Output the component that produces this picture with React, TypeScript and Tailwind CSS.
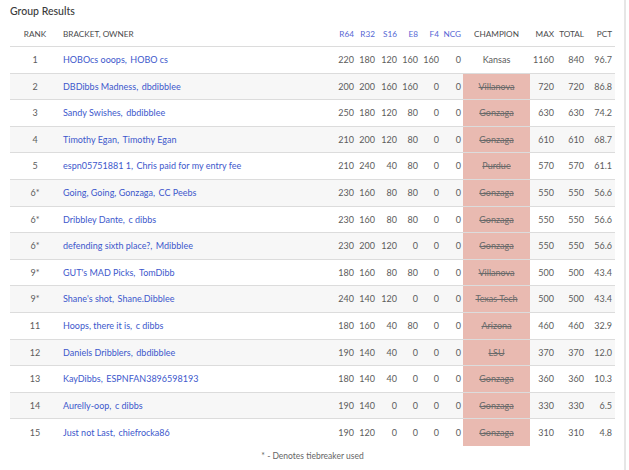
import React from "react";

type Row = {
  rank: string;
  bracket: string;
  owner: string;
  pts: number[];
  champ: string;
  alive?: boolean;
  max: string;
  total: string;
  pct: string;
};

const rows: Row[] = [
  { rank: "1", bracket: "HOBOcs ooops,", owner: "HOBO cs", pts: [220, 180, 120, 160, 160, 0], champ: "Kansas", alive: true, max: "1160", total: "840", pct: "96.7" },
  { rank: "2", bracket: "DBDibbs Madness,", owner: "dbdibblee", pts: [200, 200, 160, 160, 0, 0], champ: "Villanova", max: "720", total: "720", pct: "86.8" },
  { rank: "3", bracket: "Sandy Swishes,", owner: "dbdibblee", pts: [250, 180, 120, 80, 0, 0], champ: "Gonzaga", max: "630", total: "630", pct: "74.2" },
  { rank: "4", bracket: "Timothy Egan,", owner: "Timothy Egan", pts: [210, 200, 120, 80, 0, 0], champ: "Gonzaga", max: "610", total: "610", pct: "68.7" },
  { rank: "5", bracket: "espn05751881 1,", owner: "Chris paid for my entry fee", pts: [210, 240, 40, 80, 0, 0], champ: "Purdue", max: "570", total: "570", pct: "61.1" },
  { rank: "6*", bracket: "Going, Going, Gonzaga,", owner: "CC Peebs", pts: [230, 160, 80, 80, 0, 0], champ: "Gonzaga", max: "550", total: "550", pct: "56.6" },
  { rank: "6*", bracket: "Dribbley Dante,", owner: "c dibbs", pts: [230, 160, 80, 80, 0, 0], champ: "Gonzaga", max: "550", total: "550", pct: "56.6" },
  { rank: "6*", bracket: "defending sixth place?,", owner: "Mdibblee", pts: [230, 200, 120, 0, 0, 0], champ: "Gonzaga", max: "550", total: "550", pct: "56.6" },
  { rank: "9*", bracket: "GUT's MAD Picks,", owner: "TomDibb", pts: [180, 160, 80, 80, 0, 0], champ: "Villanova", max: "500", total: "500", pct: "43.4" },
  { rank: "9*", bracket: "Shane's shot,", owner: "Shane.Dibblee", pts: [240, 140, 120, 0, 0, 0], champ: "Texas Tech", max: "500", total: "500", pct: "43.4" },
  { rank: "11", bracket: "Hoops, there it is,", owner: "c dibbs", pts: [180, 160, 40, 80, 0, 0], champ: "Arizona", max: "460", total: "460", pct: "32.9" },
  { rank: "12", bracket: "Daniels Dribblers,", owner: "dbdibblee", pts: [190, 140, 40, 0, 0, 0], champ: "LSU", max: "370", total: "370", pct: "12.0" },
  { rank: "13", bracket: "KayDibbs,", owner: "ESPNFAN3896598193", pts: [180, 140, 40, 0, 0, 0], champ: "Gonzaga", max: "360", total: "360", pct: "10.3" },
  { rank: "14", bracket: "Aurelly-oop,", owner: "c dibbs", pts: [190, 140, 0, 0, 0, 0], champ: "Gonzaga", max: "330", total: "330", pct: "6.5" },
  { rank: "15", bracket: "Just not Last,", owner: "chiefrocka86", pts: [190, 120, 0, 0, 0, 0], champ: "Gonzaga", max: "310", total: "310", pct: "4.8" },
];

const grid =
  "grid grid-cols-[50px_270px_24px_21px_22px_21px_21px_24px_67px_24px_30px_31px]";

export default function App() {
  return (
    <div
      className="flex w-[629px] h-[470px] bg-white overflow-hidden"
      style={{ fontFamily: "Lato, 'Open Sans', Arial, sans-serif" }}
    >
      <div className="w-[624px] pl-[10px] pr-[9px]">
        <div className="h-[23px] flex items-center text-[10.5px] text-[#3a3a3a] font-medium">
          Group Results
        </div>
        <div className={`${grid} h-[24px] items-center border-b border-[#dcdcdc] text-[8.2px] text-[#4a4b4c]`}>
          <div className="text-center">RANK</div>
          <div className="pl-[3px]">BRACKET, OWNER</div>
          <div className="text-right text-[#5566d4]">R64</div>
          <div className="text-right text-[#5566d4]">R32</div>
          <div className="text-right text-[#5566d4]">S16</div>
          <div className="text-right text-[#5566d4]">E8</div>
          <div className="text-right text-[#5566d4]">F4</div>
          <div className="text-right pr-[2px] text-[#5566d4]">NCG</div>
          <div className="text-center">CHAMPION</div>
          <div className="text-right">MAX</div>
          <div className="text-right">TOTAL</div>
          <div className="text-right pr-[3px]">PCT</div>
        </div>
        {rows.map((r, i) => (
          <div
            key={i}
            className={`${grid} h-[26.6px] items-stretch text-[9px] text-[#5c5c5c] ${
              i < rows.length - 1 ? "border-b border-[#dcdcdc]" : ""
            } ${i % 2 === 1 ? "bg-[#f7f7f7]" : "bg-white"}`}
          >
            <div className="flex items-center justify-center">{r.rank}</div>
            <div className="flex items-center pl-[3px] text-[#3d58cc] whitespace-nowrap">
              <span>{r.bracket}</span>
              <span className="ml-[3.5px]">{r.owner}</span>
            </div>
            {r.pts.map((p, j) => (
              <div
                key={j}
                className={`flex items-center justify-end ${j === 5 ? "pr-[2px]" : ""}`}
              >
                {p}
              </div>
            ))}
            <div
              className={`flex items-center justify-center ${
                r.alive ? "text-[#5c5c5c]" : "bg-[#e9bab1] text-[#6a6a6a] line-through"
              }`}
            >
              {r.champ}
            </div>
            <div className="flex items-center justify-end">{r.max}</div>
            <div className="flex items-center justify-end">{r.total}</div>
            <div className="flex items-center justify-end pr-[3px]">{r.pct}</div>
          </div>
        ))}
        <div className="h-[20px] flex items-center justify-center text-[8.5px] text-[#666666]">
          * - Denotes tiebreaker used
        </div>
      </div>
      <div className="w-[5px] border-l-2 border-[#e6e6e6]" />
    </div>
  );
}
